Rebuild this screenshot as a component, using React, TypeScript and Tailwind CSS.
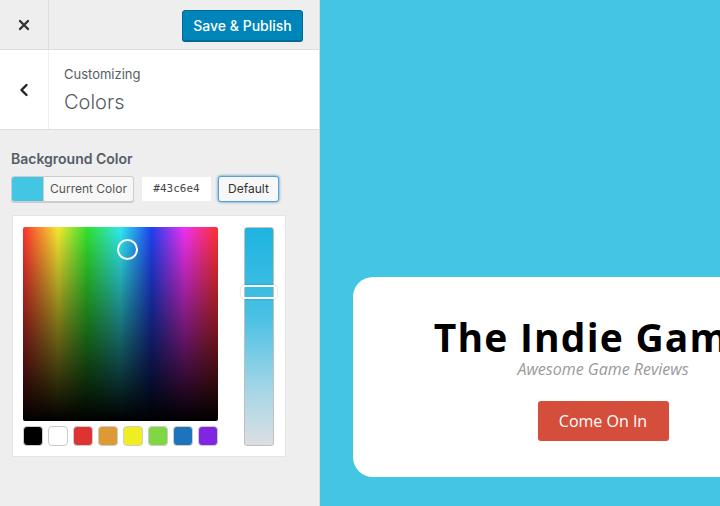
import React from "react";

const swatches = ["#000000", "#ffffff", "#dd3333", "#dd9933", "#eeee22", "#81d742", "#1e73be", "#8224e3"];

export default function App() {
  return (
    <div className="flex w-[720px] h-[506px] overflow-hidden" style={{ fontFamily: "Inter, 'Noto Sans', sans-serif" }}>
      <aside className="w-[320px] shrink-0 bg-[#eeeeee] border-r border-[#dcdcdc] flex flex-col">
        <div className="h-[50px] flex border-b border-[#dddddd]">
          <div className="w-[49px] border-r border-[#dddddd] flex items-center justify-center">
            <svg width="12" height="12" viewBox="0 0 12 12">
              <path d="M2 2 L10 10 M10 2 L2 10" stroke="#333" strokeWidth="2.4" strokeLinecap="round" />
            </svg>
          </div>
          <div className="flex-1 flex items-center justify-end pr-[16px] pt-[2px]">
            <button className="h-[31px] w-[121px] rounded-[3px] bg-[#0085ba] border border-[#006a95] text-white text-[14px] font-medium shadow-[0_1px_0_#006799]">
              Save &amp; Publish
            </button>
          </div>
        </div>
        <div className="h-[80px] bg-white flex border-b border-[#dddddd]">
          <div className="w-[49px] border-r border-[#eeeeee] flex items-center justify-center">
            <svg width="10" height="14" viewBox="0 0 10 14">
              <path d="M7.5 2 L2.5 7 L7.5 12" stroke="#222" strokeWidth="2.4" fill="none" strokeLinecap="round" strokeLinejoin="round" />
            </svg>
          </div>
          <div className="pl-[15px] pt-[15px] flex flex-col">
            <span className="text-[13px] leading-[18px] text-[#555d66]">Customizing</span>
            <span className="text-[20px] leading-[28px] font-light text-[#555d66] mt-[5px]">Colors</span>
          </div>
        </div>
        <div className="px-[11px] pt-[19px]">
          <div className="text-[14px] leading-[20px] font-semibold text-[#555d66]">Background Color</div>
          <div className="flex items-center mt-[7px] h-[26px]">
            <div className="flex h-[26px] w-[123px] rounded-[3px] border border-[#cccccc] shadow-[0_1px_0_#cccccc] overflow-hidden bg-[#f7f7f7]">
              <div className="w-[32px] bg-[#43c6e4] border-r border-[#cccccc]" />
              <div className="flex-1 flex items-center justify-center text-[12px] text-[#555555]">Current Color</div>
            </div>
            <div className="ml-[8px] w-[69px] h-[24px] bg-white flex items-center justify-center text-[11px] text-[#444]" style={{ fontFamily: "'DejaVu Sans Mono', monospace" }}>
              #43c6e4
            </div>
            <button className="ml-[7px] w-[61px] h-[26px] rounded-[3px] border border-[#5b9dd9] bg-[#f7f7f7] shadow-[0_0_3px_rgba(0,115,170,0.8)] text-[12px] text-[#333]">
              Default
            </button>
          </div>
          <div className="mt-[13px] ml-[1px] w-[274px] h-[242px] bg-white border border-[#e5e5e5] flex pl-[10px] pt-[11px]">
            <div className="flex flex-col">
              <div
                className="relative w-[195px] h-[194px] rounded-[2px]"
                style={{
                  background:
                    "linear-gradient(to bottom, rgba(0,0,0,0) 0%, rgba(0,0,0,0.5) 50%, #000 100%), linear-gradient(to right, #ff3030, #f5e830 18%, #30e030 33%, #30e8f0 50%, #2040f0 66%, #f030f0 83%, #ff3030)",
                }}
              >
                <div className="absolute left-[94px] top-[12px] w-[21px] h-[21px] rounded-full border-[2.5px] border-white" />
              </div>
              <div className="flex gap-[5px] mt-[5px]">
                {swatches.map((c) => (
                  <div key={c} className="w-[20px] h-[20px] rounded-[4px] border border-[#cccccc]" style={{ backgroundColor: c }} />
                ))}
              </div>
            </div>
            <div className="ml-[26px] relative">
              <div
                className="w-[30px] h-[219px] rounded-[3px] border border-[#bfbfbf]"
                style={{ background: "linear-gradient(to bottom, #1eb4e0, #48c0e4 40%, #a6d6e6 75%, #dcdfe2)" }}
              />
              <div className="absolute left-[-3px] top-[58px] w-[36px] h-[14px] rounded-[4px] border-[2.5px] border-white shadow-[0_0_2px_rgba(0,0,0,0.3)]" />
            </div>
          </div>
        </div>
      </aside>
      <main className="flex-1 bg-[#43c6e4] overflow-hidden pl-[33px] pt-[277px]">
        <div className="w-[500px] h-[200px] shrink-0 bg-white rounded-[20px] flex flex-col items-center pt-[40px]" style={{ fontFamily: "'Open Sans', 'Noto Sans', sans-serif" }}>
          <div className="text-[39px] leading-[40px] font-bold text-black whitespace-nowrap tracking-[1.2px]">The Indie Gamer</div>
          <div className="text-[16px] leading-[20px] italic text-[#9a9a9a] mt-[2px]">Awesome Game Reviews</div>
          <button className="mt-[22px] w-[131px] h-[40px] rounded-[3px] bg-[#d54e3c] text-white text-[16px]">Come On In</button>
        </div>
      </main>
    </div>
  );
}
